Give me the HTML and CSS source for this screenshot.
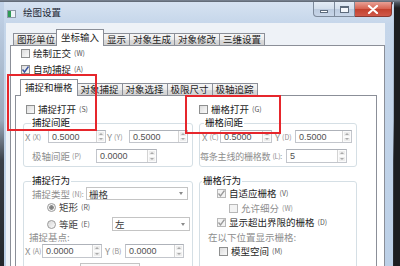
FILE: index.html
```html
<!DOCTYPE html>
<html lang="zh">
<head>
    <meta charset="UTF-8">
    <meta name="viewport" content="width=device-width, initial-scale=1.0">
    <title>绘图设置</title>
    <link rel="stylesheet" href="styles.css">
</head>
<body>
    <div class="window">
        <div class="titlebar">
            <span class="app-icon"></span>
            <span class="title">绘图设置</span>
            <div class="caption">
                <span class="cap-btn cap-min"><i></i></span>
                <span class="cap-btn cap-max"><i></i></span>
                <span class="cap-btn cap-close">
                    <svg width="12" height="9" viewBox="0 0 12 9"><path d="M2 1 L10 8 M10 1 L2 8" stroke="#fff" stroke-width="2.2" stroke-linecap="round"/></svg>
                </span>
            </div>
        </div>

        <div class="client">
            <ul class="tabs outer-tabs">
                <li class="tab">图形单位</li>
                <li class="tab active">坐标输入</li>
                <li class="tab">显示</li>
                <li class="tab">对象生成</li>
                <li class="tab">对象修改</li>
                <li class="tab">三维设置</li>
            </ul>

            <div class="panel outer-panel">
                <div class="check-row first"><span class="cb"></span>绘制正交<small>(W)</small></div>
                <div class="check-row second"><span class="cb checked"><svg width="9" height="9" viewBox="0 0 9 9"><path d="M1.5 4.5 L3.5 7 L7.5 1.5" fill="none" stroke="#3b55a0" stroke-width="1.4"/></svg></span>自动捕捉<small>(A)</small></div>

                <ul class="tabs inner-tabs">
                    <li class="tab active">捕捉和栅格</li>
                    <li class="tab">对象捕捉</li>
                    <li class="tab">对象选择</li>
                    <li class="tab">极限尺寸</li>
                    <li class="tab">极轴追踪</li>
                </ul>

                <div class="panel inner-panel">
                    <div class="cols">
                        <!-- snap column -->
                        <div class="col col-left">
                            <div class="check-row open-row"><span class="cb"></span>捕捉打开<small>(S)</small></div>

                            <div class="group">
                                <div class="legend">捕捉间距</div>
                                <div class="field-row row-a">
                                    <span class="lbl dis w23">X<small>(X)</small></span>
                                    <span class="num w58"><span class="val">0.5000</span><span class="spin"><i></i><i></i></span></span>
                                    <span class="lbl dis w23 pl1">Y<small>(Y)</small></span>
                                    <span class="num w59"><span class="val">0.5000</span><span class="spin"><i></i><i></i></span></span>
                                </div>
                                <div class="field-row row-b">
                                    <span class="lbl dis w72 pl8">极轴间距<small>(P)</small></span>
                                    <span class="num w61"><span class="val">0.0000</span><span class="spin"><i></i><i></i></span></span>
                                </div>
                            </div>

                            <div class="group group-b">
                                <div class="legend">捕捉行为</div>
                                <div class="field-row row-select">
                                    <span class="lbl dis w62 pl8">捕捉类型<small>(N):</small></span>
                                    <span class="select w102"><span class="val">栅格</span><span class="arrow"></span></span>
                                </div>
                                <div class="check-row radio-row"><span class="radio on"></span><span class="opt">矩形<small>(R)</small></span></div>
                                <div class="field-row radio-row iso">
                                    <span class="radio"></span><span class="opt w53">等距<small>(E)</small></span>
                                    <span class="select w78"><span class="val">左</span><span class="arrow"></span></span>
                                </div>
                                <div class="check-row base-row dis">捕捉基点:</div>
                                <div class="field-row row-base">
                                    <span class="lbl dis w18 pl1">X<small>(A)</small></span>
                                    <span class="num w60"><span class="val">0.0000</span><span class="spin"><i></i><i></i></span></span>
                                    <span class="lbl dis w23 pl3">Y<small>(B)</small></span>
                                    <span class="num w59"><span class="val">0.0000</span><span class="spin"><i></i><i></i></span></span>
                                </div>
                                <div class="field-row row-more"><span class="stub"></span></div>
                            </div>
                        </div>

                        <!-- grid column -->
                        <div class="col col-right">
                            <div class="check-row open-row"><span class="cb"></span>栅格打开<small>(G)</small></div>

                            <div class="group">
                                <div class="legend lg-right">栅格间距</div>
                                <div class="field-row row-a">
                                    <span class="lbl dis w19 pl1">X<small>(C)</small></span>
                                    <span class="num w52"><span class="val">0.5000</span><span class="spin"><i></i><i></i></span></span>
                                    <span class="lbl dis w23 pl3">Y<small>(D)</small></span>
                                    <span class="num w57"><span class="val">0.5000</span><span class="spin"><i></i><i></i></span></span>
                                </div>
                                <div class="field-row row-b">
                                    <span class="lbl dis w86 narrow">每条主线的栅格数<small>(L):</small></span>
                                    <span class="num w61"><span class="val">5</span><span class="spin"><i></i><i></i></span></span>
                                </div>
                            </div>

                            <div class="group group-b">
                                <div class="legend lg-right2">栅格行为</div>
                                <div class="check-row g1 pl18"><span class="cb checked dim"><svg width="9" height="9" viewBox="0 0 9 9"><path d="M1.5 4.5 L3.5 7 L7.5 1.5" fill="none" stroke="#9a9a9a" stroke-width="1.3"/></svg></span>自适应栅格<small>(V)</small></div>
                                <div class="check-row g2 pl30 dis"><span class="cb dim"></span>允许细分<small>(W)</small></div>
                                <div class="check-row g3 pl18"><span class="cb checked dim"><svg width="9" height="9" viewBox="0 0 9 9"><path d="M1.5 4.5 L3.5 7 L7.5 1.5" fill="none" stroke="#9a9a9a" stroke-width="1.3"/></svg></span>显示超出界限的栅格<small>(D)</small></div>
                                <div class="check-row g4 pl8 dis">在以下位置显示栅格:</div>
                                <div class="check-row g5 pl20"><span class="cb"></span>模型空间<small>(M)</small></div>
                            </div>
                        </div>
                    </div>
                </div>
            </div>
        </div>
    </div>

    <div class="mark mark-snap"></div>
    <div class="mark mark-grid"></div>
</body>
</html>
```

FILE: styles.css
```css
* {
    box-sizing: border-box;
}

body {
    margin: 0;
    width: 400px;
    height: 266px;
    overflow: hidden;
    position: relative;
    padding-top: 2px;
    background: linear-gradient(#7d8796, #4a525c 3px, #1c1e21 8px);
    font-family: "Noto Sans CJK SC", "Noto Sans", sans-serif;
    font-size: 9.5px;
    color: #1e1e1e;
}

small {
    font-size: 7px;
    margin-left: 3px;
    color: #555;
}

.dis, .dis small {
    color: #8e8e8e;
}

/* window frame */
.window {
    width: 394px;
    height: 264px;
    display: flex;
    flex-direction: column;
    border-left: 4px solid;
    border-image: linear-gradient(#c3d4ea, #9aa9bb 45%, #3b4048 60%, #22262b) 1;
    border-right: 1px solid #6f7d8e;
    background: linear-gradient(#d6e2f1, #c5d6ea 22px, #bcd0e7);
    border-top-right-radius: 6px;
}

.titlebar {
    height: 21px;
    display: flex;
    align-items: flex-start;
}

.app-icon {
    width: 9px;
    height: 8px;
    margin: 8px 0 0 3px;
    border: 1px solid #8d9aa8;
    background: linear-gradient(90deg, #2f9a55 0, #2f9a55 40%, #eef3f8 40%);
}

.title {
    margin-left: 7px;
    line-height: 21px;
    font-size: 9.5px;
    color: #1b2633;
}

.caption {
    display: flex;
    margin-left: auto;
    margin-right: 1px;
    height: 15px;
}

.cap-btn {
    display: flex;
    align-items: center;
    justify-content: center;
    height: 15px;
    border: 1px solid #7d8a9b;
    border-top: none;
    background: linear-gradient(#e4ecf6, #d2deec 50%, #bccbdf 50%, #c8d6e8);
}

.cap-min {
    width: 22px;
    border-bottom-left-radius: 4px;
}

.cap-min i {
    width: 8px;
    height: 3px;
    margin-top: 4px;
    background: #fff;
    border: 1px solid #5d6b7c;
}

.cap-max {
    width: 20px;
    border-left: none;
}

.cap-max i {
    width: 9px;
    height: 7px;
    border: 1px solid #5d6b7c;
    border-top-width: 2px;
    background: #f4f7fb;
}

.cap-close {
    width: 37px;
    border-left: none;
    border-color: #8a3a32;
    border-bottom-right-radius: 4px;
    background: linear-gradient(#e8a196, #d6604e 50%, #c2402d 50%, #d0594a);
}

/* client area */
.client {
    flex: 1;
    display: flex;
    flex-direction: column;
    margin: 0 8px 0 2px;
    padding: 6px 0 0 4px;
    background: #eef2f7;
}

.tabs {
    display: flex;
    align-items: flex-end;
    list-style: none;
    margin: 0;
    height: 16px;
}

.outer-tabs {
    padding: 0 0 0 3px;
}

.tab {
    height: 12px;
    line-height: 11px;
    padding: 0 3px;
    margin-right: -1px;
    border: 1px solid #8b8f98;
    border-bottom: none;
    background: linear-gradient(#f6f6f6, #ebebeb 50%, #dcdcdc 50%, #d2d2d2);
    white-space: nowrap;
    font-size: 9.5px;
}

.tab.active {
    height: 17px;
    line-height: 15px;
    margin: 0 -1px -1px -2px;
    padding: 0 4px;
    background: #fff;
    position: relative;
    z-index: 1;
}

.panel {
    border: 1px solid #8b8f98;
    background: #fff;
}

.outer-panel {
    flex: 1;
    padding-left: 4px;
}

/* rows */
.check-row {
    display: flex;
    align-items: center;
    height: 10px;
    white-space: nowrap;
}

.outer-panel > .first {
    margin-top: 2px;
    padding-left: 6px;
}

.outer-panel > .second {
    margin-top: 6px;
    padding-left: 6px;
}

.cb {
    width: 9px;
    height: 9px;
    margin-right: 3px;
    border: 1px solid #8e8f8f;
    background: linear-gradient(135deg, #dcdcdc, #fafafa);
    display: flex;
    flex: none;
}

.cb svg {
    margin: -1px;
}

.cb.dim {
    border-color: #b8b8b8;
    background: #f3f3f3;
}

.radio {
    width: 9px;
    height: 9px;
    margin-right: 3px;
    border: 1px solid #9a9a9a;
    border-radius: 50%;
    background: linear-gradient(135deg, #d8d8d8, #fafafa);
    flex: none;
}

.radio.on {
    background: radial-gradient(circle, #7a7a7a 0, #8d8d8d 2px, #f2f2f2 2.6px);
}

.inner-tabs {
    margin-top: 5px;
    padding-left: 7px;
}

.inner-panel {
    width: 362px;
    flex: 1;
    border-bottom: none;
    padding-left: 7px;
}

.cols {
    display: flex;
    gap: 6px;
}

.col-left {
    width: 170px;
}

.col-right {
    width: 158px;
}

.open-row {
    margin-top: 8px;
    padding-left: 3px;
}

.col-right .open-row {
    padding-left: 0;
}

.group {
    margin-top: 9px;
    border: 1px solid #d5dfe5;
    border-radius: 3px;
    padding-bottom: 3px;
}

.group-b {
    margin-top: 14px;
    height: 120px;
}

.legend {
    display: table;
    height: 13px;
    line-height: 13px;
    margin: -8px 0 0 7px;
    padding: 0 1px;
    background: #fff;
    color: #111;
}

.lg-right {
    margin-left: 4px;
}

.lg-right2 {
    margin-left: 2px;
}

.field-row {
    display: flex;
    align-items: stretch;
    white-space: nowrap;
}

.row-a {
    margin-top: 1px;
    height: 13px;
    padding-left: 1px;
}

.row-b {
    margin-top: 6px;
    height: 14px;
}

.lbl {
    display: flex;
    align-items: center;
    overflow: visible;
    flex: none;
}

.lbl small {
    margin-left: 2px;
}

.narrow {
    font-size: 9px;
    letter-spacing: -0.2px;
}

.pl1 { padding-left: 1px; }
.pl3 { padding-left: 3px; }
.pl8 { padding-left: 8px; }
.pl18 { padding-left: 17px; }
.pl20 { padding-left: 19px; }
.pl30 { padding-left: 29px; }

.w18 { width: 18px; }
.w19 { width: 19px; }
.w23 { width: 23px; }
.w52 { width: 52px; }
.w53 { width: 53px; }
.w57 { width: 57px; }
.w58 { width: 58px; }
.w59 { width: 59px; }
.w60 { width: 60px; }
.w61 { width: 61px; }
.w62 { width: 62px; }
.w72 { width: 72px; }
.w78 { width: 78px; }
.w86 { width: 86px; }
.w102 { width: 102px; }

/* numeric inputs with spinner */
.num {
    display: flex;
    flex: none;
    border: 1px solid #c3c6cc;
    border-top-color: #aeb2b9;
    background: #fff;
    position: relative;
}

.val {
    flex: 1;
    display: flex;
    align-items: center;
    padding-left: 3px;
    font-size: 9px;
    color: #505050;
    font-family: "Liberation Sans", "Noto Sans CJK SC", sans-serif;
}

.spin {
    width: 9px;
    display: flex;
    flex-direction: column;
    border-left: 1px solid #d4d4d4;
}

.spin i {
    flex: 1;
    display: flex;
    align-items: center;
    justify-content: center;
    background: #ededed;
    border: 1px solid #fbfbfb;
}

.spin i::before {
    content: "";
    border-left: 2px solid transparent;
    border-right: 2px solid transparent;
    border-bottom: 2px solid #a9a9a9;
}

.spin i + i::before {
    border-bottom: none;
    border-top: 2px solid #a9a9a9;
}

/* dropdowns */
.select {
    display: flex;
    flex: none;
    border: 1px solid #c4c4c4;
    background: #fff;
}

.select .val {
    font-family: "Noto Sans CJK SC", sans-serif;
    font-size: 9.5px;
    color: #3a3a3a;
    padding-left: 2px;
}

.arrow {
    width: 12px;
    display: flex;
    align-items: center;
    justify-content: center;
}

.arrow::before {
    content: "";
    border-left: 2.5px solid transparent;
    border-right: 2.5px solid transparent;
    border-top: 3px solid #8a8a8a;
}

/* snap behaviour rows */
.row-select {
    height: 13px;
}

.radio-row {
    margin-top: 2px;
    padding-left: 23px;
}

.radio-row .opt {
    display: flex;
    align-items: center;
    color: #444;
}

.radio-row.iso {
    margin-top: 5px;
    height: 14px;
    align-items: center;
}

.radio-row.iso .select {
    align-self: stretch;
}

.base-row {
    margin-top: 1px;
    padding-left: 5px;
}

.row-base {
    margin-top: 2px;
    height: 14px;
}

.row-more {
    margin-top: 5px;
    height: 12px;
    padding-left: 56px;
}

.stub {
    width: 60px;
    border: 1px solid #c4c4c4;
    background: #fafafa;
}

/* grid behaviour rows */
.g1 { margin-top: 1px; }
.g2 { margin-top: 5px; }
.g3 { margin-top: 4px; }
.g4 { margin-top: 5px; }
.g5 { margin-top: 4px; }

.g2 small, .g4 small {
    color: #8e8e8e;
}

/* red annotation boxes */
.mark {
    position: absolute;
    border: 2px solid #e6262c;
}

.mark-snap {
    left: 7px;
    top: 74px;
    width: 90px;
    height: 57px;
}

.mark-grid {
    left: 185px;
    top: 95px;
    width: 96px;
    height: 39px;
}
```
